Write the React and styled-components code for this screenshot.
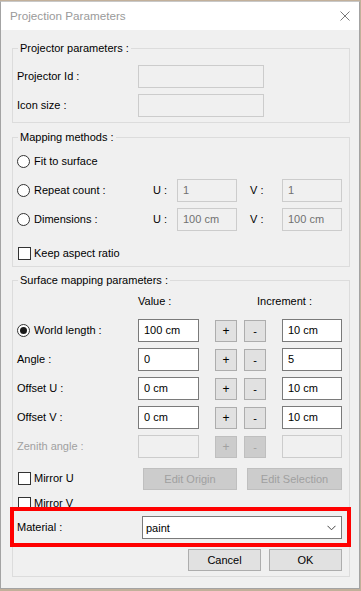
import React from "react";
import styled, { createGlobalStyle } from "styled-components";

const Global = createGlobalStyle`
  html, body { margin: 0; padding: 0; background: #c2b09a; }
  body {
    font-family: "Liberation Sans", Arial, sans-serif;
    font-size: 11px;
    color: #000;
  }
  * { box-sizing: border-box; }
`;

const Window = styled.div`
  width: 360px;
  margin-top: 1px;
  border: 1px solid #a3a3a3;
  border-top-color: #c8c8c8;
  background: #f0f0f0;
  display: flex;
  flex-direction: column;
`;

const TitleBar = styled.div`
  height: 28px;
  background: #fff;
  display: flex;
  align-items: center;
  justify-content: space-between;
  padding: 0 9px 1px 9px;
`;

const Title = styled.span`
  font-size: 11.7px;
  color: #9a9a9a;
`;

const Body = styled.div`
  padding: 12px 9px 11px 11px;
  display: flex;
  flex-direction: column;
`;

const Group = styled.fieldset`
  margin: ${(p) => p.$mt || 0}px 0 0 0;
  padding: 0;
  border: 1px solid #dcdcdc;
  min-width: 0;
`;

const Legend = styled.legend`
  padding: 0 2px;
  margin-left: 5px;
  line-height: 13px;
  font-size: 11px;
`;

const GroupContent = styled.div`
  display: flex;
  flex-direction: column;
  padding: ${(p) => p.$pt}px 6px ${(p) => p.$pb}px 4px;
`;

const Row = styled.div`
  display: flex;
  align-items: center;
  height: ${(p) => p.$h || 23}px;
  margin-top: ${(p) => p.$mt || 0}px;
  flex: none;
`;

const ClippedRow = styled.div`
  display: flex;
  align-items: flex-start;
  height: 15px;
  margin-top: ${(p) => p.$mt || 0}px;
  padding-top: 5px;
  overflow: hidden;
  flex: none;
`;

const Label = styled.span`
  width: ${(p) => p.$w}px;
  margin-left: ${(p) => p.$ml || 0}px;
  flex: none;
  white-space: nowrap;
  color: ${(p) => (p.$disabled ? "#a0a0a0" : "#000")};
  display: flex;
  align-items: center;
  line-height: 13px;
`;

const TextBox = styled.input`
  width: ${(p) => p.$w}px;
  height: 23px;
  margin: 0 0 0 ${(p) => p.$ml || 0}px;
  padding: 2px 4px 4px 5px;
  flex: none;
  font-family: inherit;
  font-size: 11px;
  outline: none;
  border: 1px solid ${(p) => (p.$disabled ? "#cccccc" : "#7a7a7a")};
  background: ${(p) => (p.$disabled ? "#f0f0f0" : "#ffffff")};
  color: ${(p) => (p.$disabled ? "#707070" : "#000")};
  border-radius: 0;
`;

const Button = styled.button`
  width: ${(p) => p.$w}px;
  height: 22px;
  margin: 0 0 0 ${(p) => p.$ml || 0}px;
  padding: 0;
  flex: none;
  font-family: inherit;
  font-size: ${(p) => (p.$big ? 12 : 11)}px;
  border-radius: 0;
  border: 1px solid ${(p) => (p.$disabled ? "#bfbfbf" : "#adadad")};
  background: ${(p) => (p.$disabled ? "#cccccc" : "#e1e1e1")};
  color: ${(p) => (p.$disabled ? "#a0a0a0" : "#000")};
  line-height: 20px;
`;

const Radio = styled.span`
  width: 13px;
  height: 13px;
  border-radius: 50%;
  border: 1px solid #333;
  background: #fff;
  margin-right: 4px;
  flex: none;
  display: flex;
  align-items: center;
  justify-content: center;
  &::after {
    content: "";
    width: 7px;
    height: 7px;
    border-radius: 50%;
    background: ${(p) => (p.$checked ? "#1a1a1a" : "transparent")};
  }
`;

const Checkbox = styled.span`
  width: 13px;
  height: 13px;
  border: 1px solid #333;
  background: #fff;
  margin: 0 3px 0 1px;
  flex: none;
`;

const Highlight = styled.div`
  height: 40px;
  margin: 0 -8px 0 -7px;
  border: 4px solid #ff0000;
  display: flex;
  align-items: center;
  padding: 1px 0 0 3px;
  flex: none;
`;

const Select = styled.div`
  width: 200px;
  height: 23px;
  border: 1px solid #7a7a7a;
  background: #fff;
  display: flex;
  align-items: center;
  justify-content: space-between;
  padding: 0 5px 0 3px;
  flex: none;
`;

const ButtonBar = styled.div`
  display: flex;
  justify-content: flex-end;
  gap: 8px;
  height: 22px;
  margin-top: 2px;
  padding-right: 1px;
  flex: none;
`;

const CloseIcon = () => (
  <svg width="10" height="10" viewBox="0 0 10 10">
    <path d="M0.5 0.5 L9.5 9.5 M9.5 0.5 L0.5 9.5" stroke="#7a7a7a" strokeWidth="1" fill="none" />
  </svg>
);

const Chevron = () => (
  <svg width="9" height="6" viewBox="0 0 9 6">
    <path d="M0.5 0.8 L4.5 4.8 L8.5 0.8" stroke="#444" strokeWidth="1" fill="none" />
  </svg>
);

const ParamRow = ({ label, radio, value, inc, disabled, mt }) => (
  <Row $mt={mt}>
    <Label $w={121} $disabled={disabled}>
      {radio && <Radio $checked />}
      {label}
    </Label>
    <TextBox $w={61} $disabled={disabled} readOnly value={value || ""} />
    <Button $w={22} $ml={16} $big $disabled={disabled}>+</Button>
    <Button $w={22} $ml={7} $disabled={disabled}>-</Button>
    <TextBox $w={60} $ml={16} $disabled={disabled} readOnly value={inc || ""} />
  </Row>
);

const MethodRow = ({ label, u, v, mt }) => (
  <Row $mt={mt}>
    <Label $w={136}>
      <Radio />
      {label}
    </Label>
    {u !== undefined && (
      <>
        <Label $w={24}>U :</Label>
        <TextBox $w={60} $disabled readOnly value={u} />
        <Label $w={32} $ml={13}>V :</Label>
        <TextBox $w={60} $disabled readOnly value={v} />
      </>
    )}
  </Row>
);

export default function App() {
  return (
    <>
      <Global />
      <Window>
        <TitleBar>
          <Title>Projection Parameters</Title>
          <CloseIcon />
        </TitleBar>
        <Body>
          <Group>
            <Legend>Projector parameters :</Legend>
            <GroupContent $pt={10} $pb={5}>
              <Row>
                <Label $w={121}>Projector Id :</Label>
                <TextBox $w={126} $disabled readOnly value="" />
              </Row>
              <Row $mt={6}>
                <Label $w={121}>Icon size :</Label>
                <TextBox $w={126} $disabled readOnly value="" />
              </Row>
            </GroupContent>
          </Group>

          <Group $mt={8}>
            <Legend>Mapping methods :</Legend>
            <GroupContent $pt={6} $pb={1}>
              <MethodRow label="Fit to surface" />
              <MethodRow label="Repeat count :" u="1" v="1" mt={6} />
              <MethodRow label="Dimensions :" u="100 cm" v="100 cm" mt={6} />
              <Row $mt={11}>
                <Label $w={200}>
                  <Checkbox />
                  Keep aspect ratio
                </Label>
              </Row>
            </GroupContent>
          </Group>

          <Group $mt={7}>
            <Legend>Surface mapping parameters :</Legend>
            <GroupContent $pt={3} $pb={5}>
              <Row>
                <Label $w={121} />
                <Label $w={119}>Value :</Label>
                <Label $w={80}>Increment :</Label>
              </Row>
              <ParamRow radio label="World length :" value="100 cm" inc="10 cm" mt={6} />
              <ParamRow label="Angle :" value="0" inc="5" mt={6} />
              <ParamRow label="Offset U :" value="0 cm" inc="10 cm" mt={6} />
              <ParamRow label="Offset V :" value="0 cm" inc="10 cm" mt={6} />
              <ParamRow label="Zenith angle :" disabled mt={6} />
              <Row $mt={9}>
                <Label $w={126}>
                  <Checkbox />
                  Mirror U
                </Label>
                <Button $w={94} $disabled>Edit Origin</Button>
                <Button $w={95} $ml={10} $disabled>Edit Selection</Button>
              </Row>
              <ClippedRow $mt={2}>
                <Label $w={126}>
                  <Checkbox />
                  Mirror V
                </Label>
              </ClippedRow>
              <Highlight>
                <Label $w={125}>Material :</Label>
                <Select>
                  <span>paint</span>
                  <Chevron />
                </Select>
              </Highlight>
              <ButtonBar>
                <Button $w={73}>Cancel</Button>
                <Button $w={73}>OK</Button>
              </ButtonBar>
            </GroupContent>
          </Group>
        </Body>
      </Window>
    </>
  );
}
